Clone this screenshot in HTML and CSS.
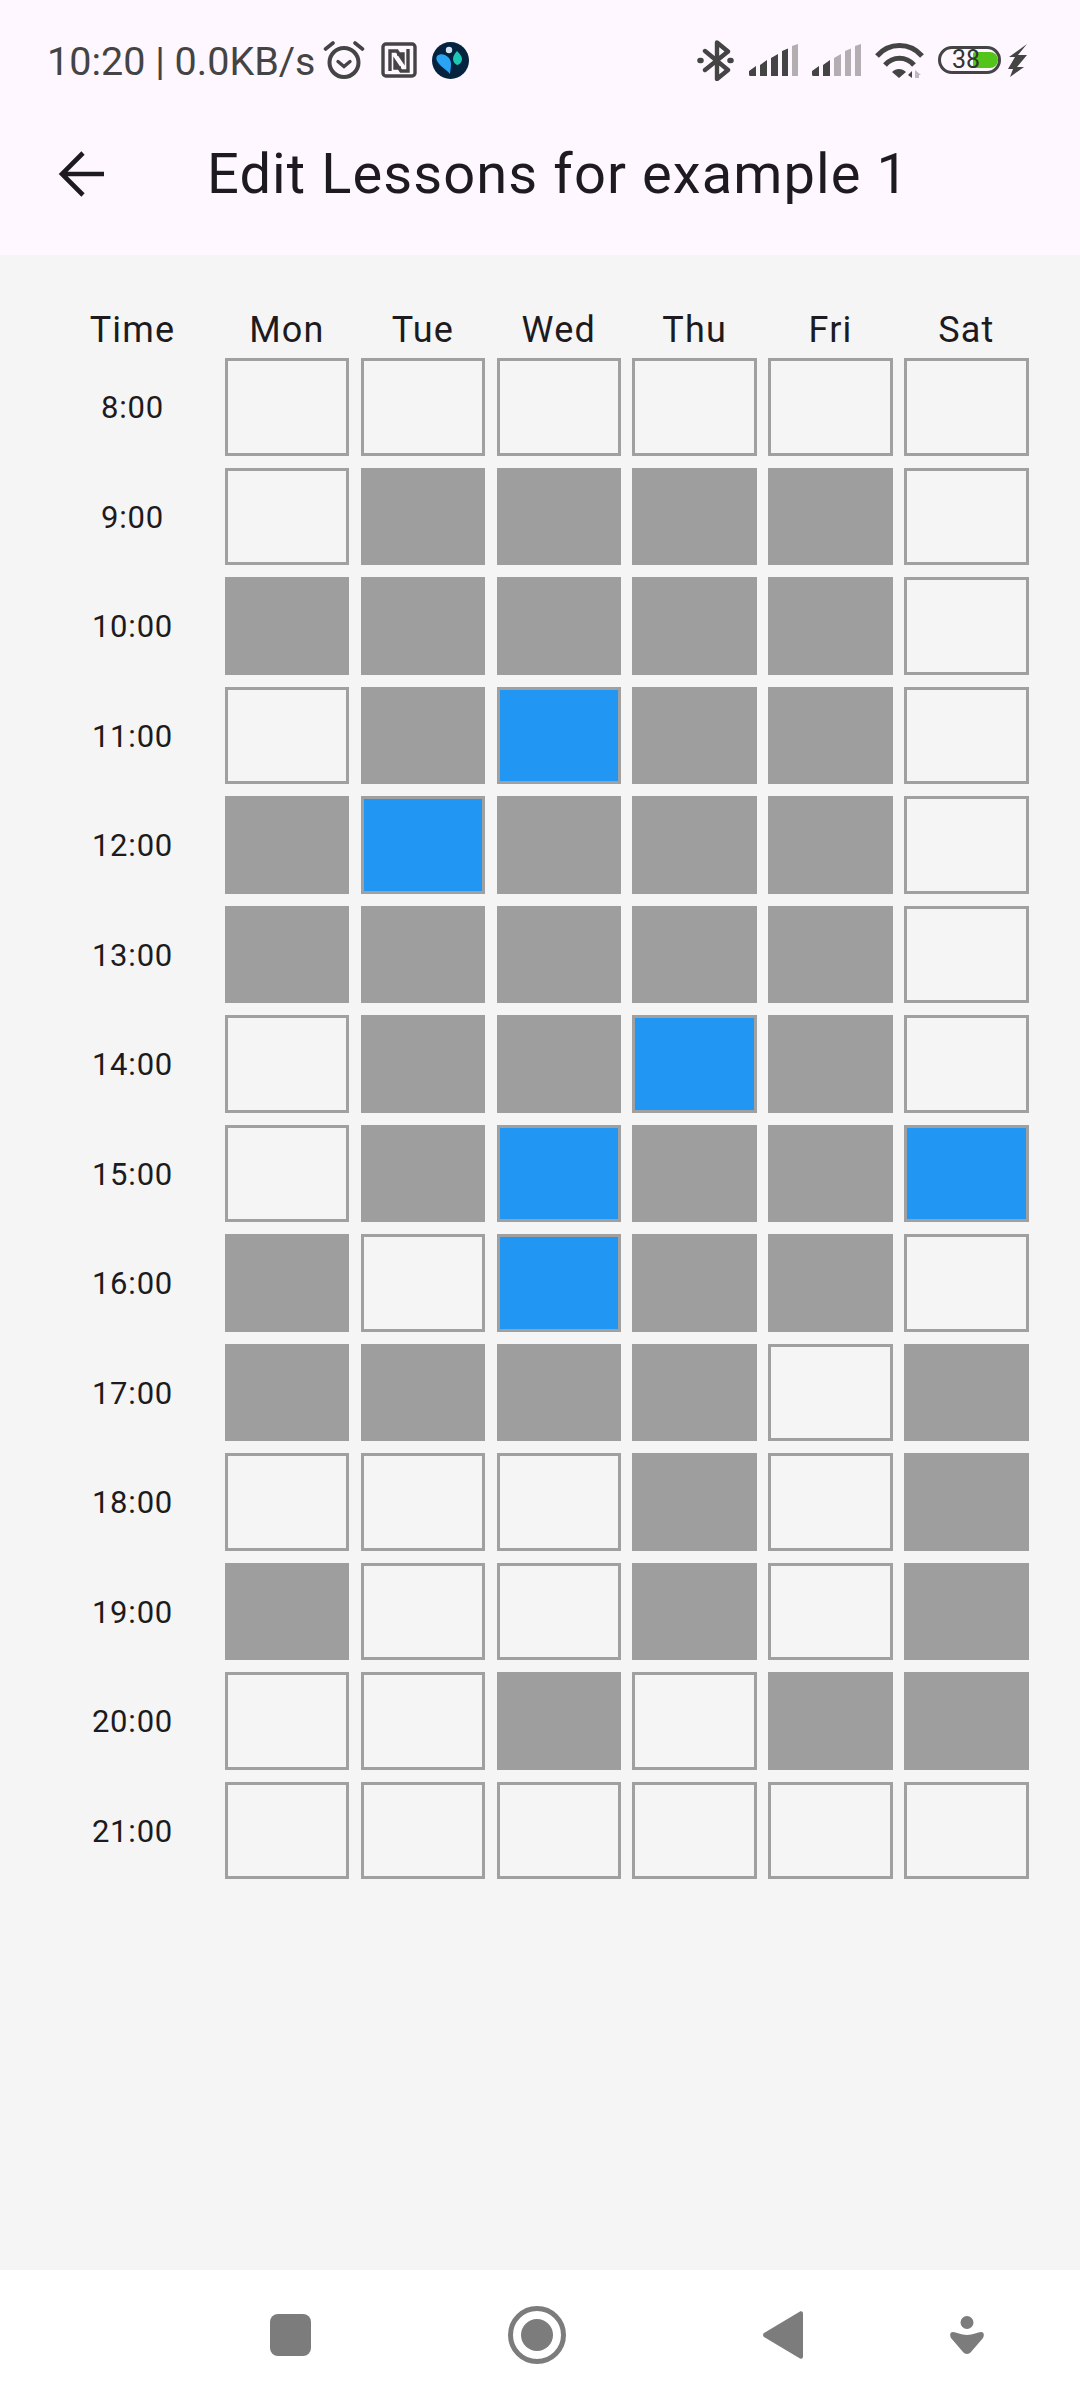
FILE: index.html
```html
<!DOCTYPE html>
<html lang="en">
  <head>
    <meta charset="UTF-8">
    <meta name="viewport" content="width=device-width, initial-scale=1.0">
    <title>Edit Lessons</title>
    <link rel="stylesheet" href="styles.css">
  </head>
<body>
  <header class="top">
    <div class="status">
      <span class="clock">10:20 | 0.0KB/s</span>
      <svg class="ic-alarm" viewBox="0 0 42 38" fill="none" stroke="#444" stroke-linecap="round">
        <circle cx="21" cy="21.500" r="14.500" stroke-width="4"/>
        <path d="M15 20.500l6 5 6-5" stroke-width="3.400"/>
        <path d="M2.500 8L10 2M39.500 8L32 2" stroke-width="3.600"/>
      </svg>
      <svg class="ic-nfc" viewBox="0 0 36 36" fill="none" stroke="#444" stroke-width="3.400">
        <rect x="2" y="2" width="32" height="32" rx="3"/>
        <path d="M9 29V9h7l6 9v-6h-6M27 7v22h-7l-6-9v6h6"/>
      </svg>
      <svg class="ic-app" viewBox="0 0 37 37">
        <circle cx="18.500" cy="18.500" r="18.500" fill="#05233f"/>
        <path d="M5 14c3-3 8-2 11 1 2 2 3 4 3 7 0 4-1 8-1 10-2-3-6-5-9-8-3-3-6-7-4-10z" fill="#2aa5f4"/>
        <path d="M25 9c2 2 5 5 5 8s-3 6-5 6c-2-1-4-3-4-6s2-6 4-8z" fill="#1cc8b4"/>
        <circle cx="17" cy="8" r="3.200" fill="#d5e6f2"/>
      </svg>
      <span class="spacer"></span>
      <svg class="ic-bt" viewBox="0 0 37 41" fill="none" stroke="#444" stroke-width="4.400" stroke-linejoin="round" stroke-linecap="round">
        <path d="M8 11l23 19-11 9V2.500l11 9L8 30"/>
        <path d="M3 20.500h1M33 20.500h1" stroke-width="5.500"/>
      </svg>
      <svg class="ic-signal" viewBox="0 0 49 32">
        <path d="M0 27l7-5v10H1.500A1.500 1.500 0 0 1 0 30.500zM11 21l7-5v16h-7zM22 14l7-4v22h-7zM33 7l6-2.500V32h-6z" fill="#444"/>
        <path d="M43 2l6-2v32h-6z" fill="#b2aeb2"/>
      </svg>
      <svg class="ic-signal" viewBox="0 0 49 32">
        <path d="M0 27l7-5v10H1.500A1.500 1.500 0 0 1 0 30.500zM11 21l7-5v16h-7z" fill="#444"/>
        <path d="M22 14l7-4v22h-7zM33 7l6-2.500V32h-6zM43 2l6-2v32h-6z" fill="#b2aeb2"/>
      </svg>
      <svg class="ic-wifi" viewBox="0 0 49 35" fill="none" stroke="#444" stroke-width="5">
        <path d="M2 13C14 -1 35 -1 47 13"/>
        <path d="M10 22c8-9 21-9 29 0"/>
        <path d="M24 35l-7-6c4-4 10-4 14 0z" fill="#444" stroke="none"/>
        <path d="M37 35l-4-3 4-4z" fill="#444" stroke="none"/>
        <path d="M40 27l6 5h-2v3h-4z" fill="#bbb" stroke="none"/>
      </svg>
      <div class="battery">
        <span class="battery-fill"></span>
        <span class="battery-num">38</span>
      </div>
      <svg class="ic-bolt" viewBox="0 0 19 33">
        <path d="M19 0L10 11h9L9 23h7L2 33l3-8H0l7-12H1z" fill="#444"/>
      </svg>
    </div>
    <div class="toolbar">
      <svg class="ic-back" viewBox="0 0 46 46" fill="none" stroke="#1d1b20" stroke-width="4.600">
        <path d="M46 23H4M25 2L4 23l21 21"/>
      </svg>
      <h1>Edit Lessons for example 1</h1>
    </div>
  </header>

  <main class="table">
    <div class="head">Time</div>
    <div class="head">Mon</div>
    <div class="head">Tue</div>
    <div class="head">Wed</div>
    <div class="head">Thu</div>
    <div class="head">Fri</div>
    <div class="head">Sat</div>

    <div class="hour">8:00</div>
    <div class="cell"></div><div class="cell"></div><div class="cell"></div><div class="cell"></div><div class="cell"></div><div class="cell"></div>

    <div class="hour">9:00</div>
    <div class="cell"></div><div class="cell busy"></div><div class="cell busy"></div><div class="cell busy"></div><div class="cell busy"></div><div class="cell"></div>

    <div class="hour">10:00</div>
    <div class="cell busy"></div><div class="cell busy"></div><div class="cell busy"></div><div class="cell busy"></div><div class="cell busy"></div><div class="cell"></div>

    <div class="hour">11:00</div>
    <div class="cell"></div><div class="cell busy"></div><div class="cell picked"></div><div class="cell busy"></div><div class="cell busy"></div><div class="cell"></div>

    <div class="hour">12:00</div>
    <div class="cell busy"></div><div class="cell picked"></div><div class="cell busy"></div><div class="cell busy"></div><div class="cell busy"></div><div class="cell"></div>

    <div class="hour">13:00</div>
    <div class="cell busy"></div><div class="cell busy"></div><div class="cell busy"></div><div class="cell busy"></div><div class="cell busy"></div><div class="cell"></div>

    <div class="hour">14:00</div>
    <div class="cell"></div><div class="cell busy"></div><div class="cell busy"></div><div class="cell picked"></div><div class="cell busy"></div><div class="cell"></div>

    <div class="hour">15:00</div>
    <div class="cell"></div><div class="cell busy"></div><div class="cell picked"></div><div class="cell busy"></div><div class="cell busy"></div><div class="cell picked"></div>

    <div class="hour">16:00</div>
    <div class="cell busy"></div><div class="cell"></div><div class="cell picked"></div><div class="cell busy"></div><div class="cell busy"></div><div class="cell"></div>

    <div class="hour">17:00</div>
    <div class="cell busy"></div><div class="cell busy"></div><div class="cell busy"></div><div class="cell busy"></div><div class="cell"></div><div class="cell busy"></div>

    <div class="hour">18:00</div>
    <div class="cell"></div><div class="cell"></div><div class="cell"></div><div class="cell busy"></div><div class="cell"></div><div class="cell busy"></div>

    <div class="hour">19:00</div>
    <div class="cell busy"></div><div class="cell"></div><div class="cell"></div><div class="cell busy"></div><div class="cell"></div><div class="cell busy"></div>

    <div class="hour">20:00</div>
    <div class="cell"></div><div class="cell"></div><div class="cell busy"></div><div class="cell"></div><div class="cell busy"></div><div class="cell busy"></div>

    <div class="hour">21:00</div>
    <div class="cell"></div><div class="cell"></div><div class="cell"></div><div class="cell"></div><div class="cell"></div><div class="cell"></div>
  </main>

  <nav class="nav">
    <svg class="nav-square" viewBox="0 0 41 42"><rect width="41" height="42" rx="8" fill="#7c7c7c"/></svg>
    <svg class="nav-home" viewBox="0 0 58 58">
      <circle cx="29" cy="29" r="26.500" fill="none" stroke="#7c7c7c" stroke-width="5"/>
      <circle cx="29" cy="29" r="16" fill="#7c7c7c"/>
    </svg>
    <svg class="nav-back" viewBox="0 0 40 48"><path d="M37 0.500c2-.800 3 .500 3 2v43c0 1.500-1 2.800-3 2L1 26c-1.300-1.200-1.300-2.800 0-4z" fill="#7c7c7c"/></svg>
    <svg class="nav-extra" viewBox="0 0 34 38">
      <ellipse cx="17" cy="6.500" rx="6.500" ry="6.500" fill="#7c7c7c"/>
      <path d="M3 16c3 0 8 3 14 3s11-3 14-3c3 0 3.500 3 2 6l-12 14c-2 2.500-6 2.500-8 0L1 22c-1.500-3-1-6 2-6z" fill="#7c7c7c"/>
    </svg>
  </nav>
</body>
</html>
```

FILE: styles.css
```css
body {
  margin: 0;
  height: 2400px;
  display: flex;
  flex-direction: column;
  background-color: #f5f5f5;
  color: #1d1b20;
  font-family: Roboto, sans-serif;
}
svg {
  display: block;
  flex: none;
}

.top {
  background-color: #fef7ff;
}
.status {
  height: 120px;
  display: flex;
  align-items: center;
  padding: 0 53px 0 47px;
  color: #444;
}
.clock {
  font-size: 39.5px;
  padding-top: 2px;
  margin-right: 7px;
}
.spacer {
  flex: 1;
}
.ic-alarm {
  width: 42px;
  height: 38px;
  margin-right: 16px;
}
.ic-nfc {
  width: 36px;
  height: 36px;
  margin-right: 15px;
}
.ic-app {
  width: 37px;
  height: 37px;
}
.ic-bt {
  width: 37px;
  height: 41px;
  margin-right: 15px;
}
.ic-signal {
  width: 49px;
  height: 32px;
  margin-right: 14px;
}
.ic-wifi {
  width: 49px;
  height: 35px;
  margin-right: 14px;
}
.battery {
  position: relative;
  box-sizing: border-box;
  width: 63px;
  height: 28px;
  border: 3px solid #444;
  border-radius: 14px;
  margin-right: 7px;
}
.battery-fill {
  position: absolute;
  left: 32px;
  top: 3px;
  width: 25px;
  height: 16px;
  background-color: #52c41a;
  border-radius: 2px 8px 8px 2px;
}
.battery-num {
  position: absolute;
  left: 11px;
  top: 0;
  font-size: 25px;
  line-height: 22px;
  color: #333;
}
.ic-bolt {
  width: 19px;
  height: 33px;
}

.toolbar {
  height: 107px;
  padding-bottom: 28px;
  display: flex;
  align-items: center;
  padding-left: 58px;
}
.ic-back {
  width: 46px;
  height: 46px;
  margin-right: 103px;
}
h1 {
  margin: 0;
  font-size: 56px;
  font-weight: 400;
  letter-spacing: 1.1px;
}

.table {
  flex: 1;
  display: grid;
  grid-template-columns: 173px repeat(6, 135.9px);
  grid-template-rows: 47px;
  grid-auto-rows: 109.5px;
  align-content: start;
  padding: 50px 46px 0;
}
.head {
  font-size: 36px;
  letter-spacing: 1.2px;
  text-align: center;
  line-height: 50px;
}
.hour {
  font-size: 31px;
  letter-spacing: 0.8px;
  text-align: center;
  align-self: center;
  padding-top: 2px;
}
.cell {
  margin: 6px 5.8px;
  border: 3px solid #a0a0a0;
}
.busy {
  background-color: #9e9e9e;
  border-color: #9e9e9e;
}
.picked {
  background-color: #2196f3;
}

.nav {
  height: 130px;
  display: flex;
  align-items: center;
  background-color: #fff;
  padding-left: 270px;
}
.nav-square {
  width: 41px;
  height: 42px;
}
.nav-home {
  width: 58px;
  height: 58px;
  margin-left: 197px;
}
.nav-back {
  width: 40px;
  height: 48px;
  margin-left: 197px;
}
.nav-extra {
  width: 34px;
  height: 38px;
  margin-left: 147px;
}
```
